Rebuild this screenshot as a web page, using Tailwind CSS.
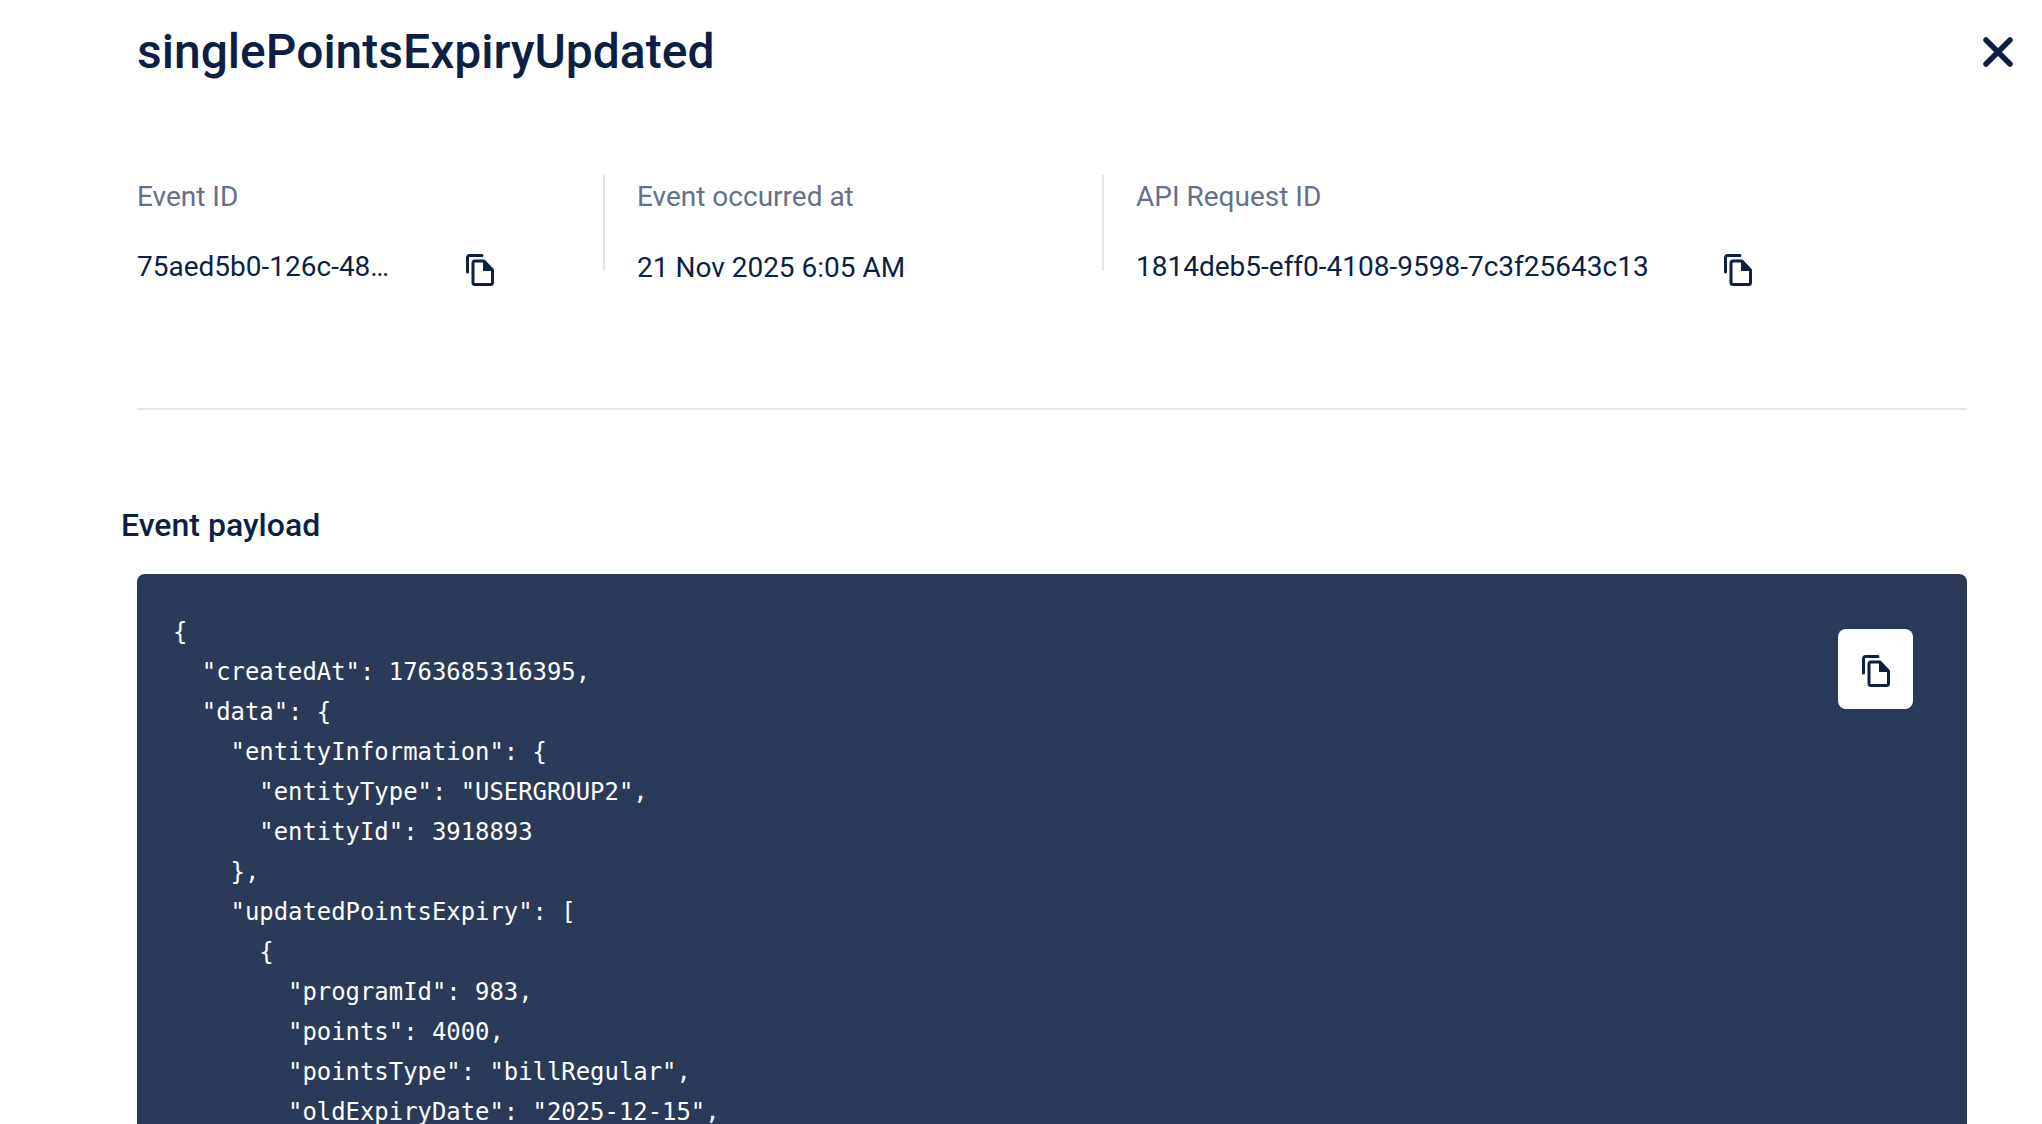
<!DOCTYPE html>
<html>
<head>
<meta charset="utf-8">
<script src="https://cdn.jsdelivr.net/npm/@tailwindcss/browser@4"></script>
</head>
<body class="bg-white">
<div class="h-[1124px] w-[2042px] overflow-hidden flex flex-col font-['Roboto',sans-serif] text-[#0d1f45]">
  <header class="shrink-0 flex items-center justify-between pl-[137px] pr-[29px] pt-[28px] h-[76px]">
    <h1 class="text-[48px] font-medium leading-[48px]">singlePointsExpiryUpdated</h1>
    <button class="w-[30px] h-[30px]">
      <svg viewBox="0 0 30 30" class="w-[30px] h-[30px]" fill="none" stroke="#0d1f45" stroke-width="5.5" stroke-linecap="round"><path d="M3 3l24 24M27 3L3 27"/></svg>
    </button>
  </header>

  <section class="shrink-0 flex ml-[137px] mt-[99px] h-[96px]">
    <div class="w-[466px] pt-[7px]">
      <div class="text-[28px] leading-[30px] text-[#64708c]">Event ID</div>
      <div class="flex items-start mt-[39px]">
        <span class="w-[329px] text-[28px] leading-[32px]">75aed5b0-126c-48…</span>
        <svg viewBox="0 0 28 32" class="w-[28px] h-[32px] mt-[3px] shrink-0"><use href="#copy"/></svg>
      </div>
    </div>
    <div class="w-[499px] pl-[32px] pt-[7px] border-l-2 border-[#e2e4ea]">
      <div class="text-[28px] leading-[30px] text-[#64708c]">Event occurred at</div>
      <div class="mt-[40px] text-[28px] leading-[32px]">21 Nov 2025 6:05 AM</div>
    </div>
    <div class="pl-[32px] pt-[7px] border-l-2 border-[#e2e4ea]">
      <div class="text-[28px] leading-[30px] text-[#64708c]">API Request ID</div>
      <div class="flex items-start mt-[39px]">
        <span class="w-[588px] text-[28px] leading-[32px]">1814deb5-eff0-4108-9598-7c3f25643c13</span>
        <svg viewBox="0 0 28 32" class="w-[28px] h-[32px] mt-[3px] shrink-0"><use href="#copy"/></svg>
      </div>
    </div>
  </section>

  <div class="shrink-0 ml-[137px] w-[1830px] mt-[137px] h-[2px] bg-[#e2e4ea]"></div>

  <h2 class="shrink-0 ml-[121px] mt-[97px] text-[32px] font-medium leading-[36px]">Event payload</h2>

  <div class="relative ml-[137px] w-[1830px] mt-[31px] flex-1 min-h-0 bg-[#2b3a58] rounded-t-lg pl-[36px] pt-[38px]">
    <pre class="font-['DejaVu_Sans_Mono',monospace] text-[23.9px] leading-[40px] text-white">{
  "createdAt": 1763685316395,
  "data": {
    "entityInformation": {
      "entityType": "USERGROUP2",
      "entityId": 3918893
    },
    "updatedPointsExpiry": [
      {
        "programId": 983,
        "points": 4000,
        "pointsType": "billRegular",
        "oldExpiryDate": "2025-12-15",</pre>
    <button class="absolute top-[55px] right-[54px] w-[75px] h-[80px] bg-white rounded-lg flex items-center justify-center">
      <svg viewBox="0 0 28 32" class="w-[28px] h-[32px] mt-[3px]"><use href="#copy"/></svg>
    </button>
  </div>
</div>

<svg class="hidden" width="0" height="0">
  <symbol id="copy" viewBox="0 0 28 32">
    <path d="M1.5 18V3.5a2 2 0 0 1 2-2H16" fill="none" stroke="#0d1f45" stroke-width="3" stroke-linecap="round"/>
    <path d="M9 7h9l8.5 9v12.5a2 2 0 0 1-2 2H9a2 2 0 0 1-2-2V9a2 2 0 0 1 2-2z" fill="none" stroke="#0d1f45" stroke-width="3" stroke-linejoin="round"/>
    <path d="M17 7h1.5l8 8.5V17h-9.5z" fill="#0d1f45"/>
  </symbol>
</svg>
</body>
</html>
